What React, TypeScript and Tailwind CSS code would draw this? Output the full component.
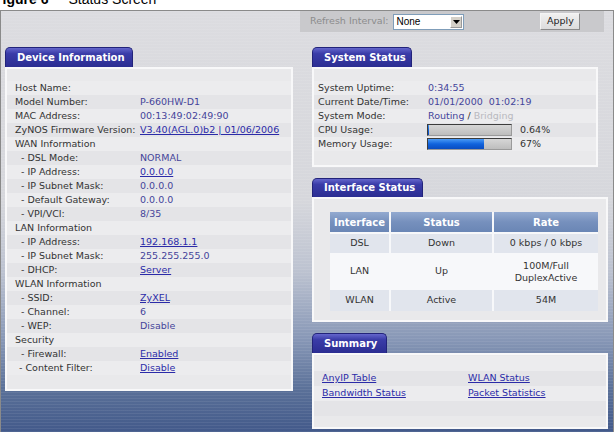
import React from "react";

type Row = { label: string; value?: string; sub?: boolean; link?: boolean; ind?: string };

const deviceRows: Row[] = [
  { label: "Host Name:", value: "" },
  { label: "Model Number:", value: "P-660HW-D1" },
  { label: "MAC Address:", value: "00:13:49:02:49:90" },
  { label: "ZyNOS Firmware Version:", value: "V3.40(AGL.0)b2 | 01/06/2006", link: true },
  { label: "WAN Information" },
  { label: "- DSL Mode:", value: "NORMAL", sub: true },
  { label: "- IP Address:", value: "0.0.0.0", sub: true, link: true },
  { label: "- IP Subnet Mask:", value: "0.0.0.0", sub: true },
  { label: "- Default Gateway:", value: "0.0.0.0", sub: true },
  { label: "- VPI/VCI:", value: "8/35", sub: true },
  { label: "LAN Information" },
  { label: "- IP Address:", value: "192.168.1.1", sub: true, link: true },
  { label: "- IP Subnet Mask:", value: "255.255.255.0", sub: true },
  { label: "- DHCP:", value: "Server", sub: true, link: true },
  { label: "WLAN Information" },
  { label: "- SSID:", value: "ZyXEL", sub: true, link: true },
  { label: "- Channel:", value: "6", sub: true },
  { label: "- WEP:", value: "Disable", sub: true },
  { label: "Security" },
  { label: "- Firewall:", value: "Enabled", sub: true, link: true },
  { label: "- Content Filter:", value: "Disable", link: true, ind: "pl-[12px]" },
];

function Tab({ children, className }: { children: React.ReactNode; className: string }) {
  return (
    <div
      className={`${className} rounded-t-[5px] border border-b-0 border-[#22237a] bg-[linear-gradient(180deg,#6466cc_0%,#3a3ca8_30%,#2b2d92_100%)] pl-[11px] text-[10px] font-bold text-white`}
    >
      {children}
    </div>
  );
}

const panel = "border-2 border-[#f8f8f9] bg-[#e9e9eb]";
const bandA = "bg-[#ececee]";
const bandB = "bg-[#e4e4e7]";

function Bar({ fill }: { fill: string }) {
  return (
    <div className="h-[12px] w-[85px] border border-[#3c3c3c] border-r-[#9a9a9a] border-b-[#9a9a9a] bg-[linear-gradient(180deg,#d6d6d6_0%,#bdbdbd_100%)]">
      <div className={`${fill} h-full bg-[linear-gradient(180deg,#4a9af5_0%,#1063dd_50%,#0a4cc0_100%)]`} />
    </div>
  );
}

export default function App() {
  return (
    <div className="h-[432px] w-[615px] overflow-hidden bg-white font-[family-name:DejaVu_Sans,sans-serif] text-[9.5px] text-[#333]">
      <div className="h-[10px] overflow-hidden">
        <div className="ml-[-6px] mt-[-8px] flex h-[14px] items-center whitespace-nowrap font-[family-name:Liberation_Sans,Arial,sans-serif] text-[14px] leading-[14px] text-black">
          <span className="font-bold">Figure 6</span>
          <span className="ml-[20px]">Status Screen</span>
        </div>
      </div>
      <div className="h-[422px] w-[614px] overflow-hidden border border-b-0 border-[#8a8a8a] bg-[image:repeating-linear-gradient(180deg,rgba(255,255,255,0.07)_0px,rgba(255,255,255,0.07)_1px,transparent_1px,transparent_3px),linear-gradient(180deg,#dcdce0_0%,#d6d7dc_45%,#bcc2d0_62%,#8797b6_78%,#5a7098_90%,#42598a_100%)]">
        {/* top bar */}
        <div className="ml-[299px] flex h-[21px] w-[304px] items-center bg-[#c9c9cc]">
          <span className="ml-[10px] text-[#8c8c8c]">Refresh Interval:</span>
          <div className="ml-[5px] flex h-[16px] w-[71px] items-center border border-[#7f9db9] bg-white">
            <span className="ml-[2px] flex-1 font-[family-name:Liberation_Sans,sans-serif] text-[10px] text-black">None</span>
            <div className="mr-[1px] flex h-[12px] w-[12px] items-center justify-center border border-[#9a9a9a] border-l-white border-t-white bg-[#d4d0c8]">
              <svg width="7" height="4" viewBox="0 0 7 4"><path d="M0 0h7L3.5 4z" fill="#000" /></svg>
            </div>
          </div>
          <div className="ml-[76px] flex h-[17px] w-[40px] items-center justify-center border border-[#8a8a8a] border-l-[#f4f4f4] border-t-[#f4f4f4] bg-[linear-gradient(180deg,#f0f0f0,#dcdcdc)] text-[#222]">
            Apply
          </div>
        </div>

        <div className="mt-[15px] flex">
          {/* left column */}
          <div className="ml-[4px] w-[288px]">
            <Tab className="h-[20px] w-[128px] leading-[19px]">Device Information</Tab>
            <div className={`${panel} h-[324px] pt-[12px]`}>
              {deviceRows.map((r, i) => (
                <div key={i} className={`flex h-[14px] items-center ${i % 2 === 0 ? bandA : bandB}`}>
                  <div className={`w-[133px] shrink-0 whitespace-nowrap ${r.ind ? r.ind : r.sub ? "pl-[14px]" : "pl-[8px]"}`}>
                    {r.label}
                  </div>
                  {r.value !== undefined && (
                    <div className={`whitespace-nowrap ${r.link ? "text-[#2b2ba8] underline" : "text-[#44449a]"}`}>{r.value}</div>
                  )}
                </div>
              ))}
            </div>
          </div>

          {/* right column */}
          <div className="ml-[19px] w-[296px]">
            <Tab className="h-[20px] w-[100px] leading-[19px]">System Status</Tab>
            <div className={`${panel} h-[100px] w-[286px] pt-[12px]`}>
              {[
                ["System Uptime:", "0:34:55"],
                ["Current Date/Time:", "01/01/2000  01:02:19"],
              ].map(([l, v], i) => (
                <div key={l} className={`flex h-[14px] items-center ${i % 2 === 0 ? bandA : bandB}`}>
                  <div className="w-[114px] shrink-0 pl-[4px]">{l}</div>
                  <div className="whitespace-pre text-[#44449a]">{v}</div>
                </div>
              ))}
              <div className={`flex h-[14px] items-center ${bandA}`}>
                <div className="w-[114px] shrink-0 pl-[4px]">System Mode:</div>
                <div className="text-[#44449a]">
                  Routing <span className="text-[#333]">/</span> <span className="text-[#b9b9bf]">Bridging</span>
                </div>
              </div>
              <div className={`flex h-[14px] items-center ${bandB}`}>
                <div className="w-[113px] shrink-0 pl-[4px]">CPU Usage:</div>
                <Bar fill="w-[1px]" />
                <div className="ml-[8px]">0.64%</div>
              </div>
              <div className={`flex h-[14px] items-center ${bandA}`}>
                <div className="w-[113px] shrink-0 pl-[4px]">Memory Usage:</div>
                <Bar fill="w-[67%]" />
                <div className="ml-[8px]">67%</div>
              </div>
            </div>

            <Tab className="mt-[11px] h-[19px] w-[111px] leading-[18px]">Interface Status</Tab>
            <div className={`${panel} h-[125px] pl-[16px] pt-[13px]`}>
              <div className="grid w-[268px] grid-cols-[59px_101px_104px] grid-rows-[20px_19px_33px_21px] gap-[2px] bg-[#f7f8fa] text-center">
                {["Interface", "Status", "Rate"].map((h) => (
                  <div key={h} className="flex items-center justify-center bg-[linear-gradient(180deg,#93aad0_0%,#7690bd_50%,#6a86b5_100%)] text-[10px] font-bold text-white">
                    {h}
                  </div>
                ))}
                <div className="flex items-center justify-center bg-[#e1e5ed]">DSL</div>
                <div className="flex items-center justify-center bg-[#e1e5ed]">Down</div>
                <div className="flex items-center justify-center bg-[#e1e5ed]">0 kbps / 0 kbps</div>
                <div className="flex items-center justify-center bg-[#f7f8fa]">LAN</div>
                <div className="flex items-center justify-center bg-[#f7f8fa]">Up</div>
                <div className="flex items-center justify-center bg-[#f7f8fa] leading-[12px]">
                  100M/Full
                  <br />
                  DuplexActive
                </div>
                <div className="flex items-center justify-center bg-[#e1e5ed]">WLAN</div>
                <div className="flex items-center justify-center bg-[#e1e5ed]">Active</div>
                <div className="flex items-center justify-center bg-[#e1e5ed]">54M</div>
              </div>
            </div>

            <Tab className="mt-[11px] h-[20px] w-[75px] leading-[19px]">Summary</Tab>
            <div className={`${panel} h-[76px] pt-[1px]`}>
              <div className={`h-[15px] ${bandA}`} />
              <div className={`flex h-[15px] items-center ${bandB}`}>
                <a className="w-[154px] pl-[8px] text-[#2b2ba8] underline">AnyIP Table</a>
                <a className="text-[#2b2ba8] underline">WLAN Status</a>
              </div>
              <div className={`flex h-[15px] items-center ${bandA}`}>
                <a className="w-[154px] pl-[8px] text-[#2b2ba8] underline">Bandwidth Status</a>
                <a className="text-[#2b2ba8] underline">Packet Statistics</a>
              </div>
              <div className={`h-[15px] ${bandB}`} />
            </div>
          </div>
        </div>
      </div>
    </div>
  );
}
